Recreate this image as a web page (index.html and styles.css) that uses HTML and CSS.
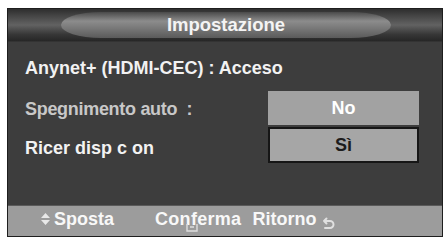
FILE: index.html
```html
<!DOCTYPE html>
<html>
<head>
<meta charset="utf-8">
<link rel="stylesheet" href="styles.css">
</head>
<body>
<div class="frame">
  <div class="header">
    <div class="pill">Impostazione</div>
  </div>
  <div class="content">
    <div class="row first">Anynet+ (HDMI-CEC) : Acceso</div>
    <div class="split">
      <div class="labels">
        <div class="row dim">Spegnimento auto&nbsp; :</div>
        <div class="row">Ricer disp c on</div>
      </div>
      <div class="options">
        <div class="opt no">No</div>
        <div class="opt si">Sì</div>
      </div>
    </div>
  </div>
  <div class="footer">
    <span class="item"><svg class="ud" width="9" height="12" viewBox="0 0 9 12"><path d="M4.5 0 L9 5 L0 5 Z M4.5 12 L9 7 L0 7 Z" fill="#e8e8e8"/></svg>Sposta</span>
    <span class="item conf">Conferma<svg class="enter" width="12" height="10" viewBox="0 0 12 10"><path d="M1 2 V9 H11 V2 M4 5 H8" stroke="#ddd" stroke-width="1.4" fill="none"/></svg></span>
    <span class="item">Ritorno<svg class="ret" width="13" height="13" viewBox="0 0 13 13"><path d="M2 4 H8 A3.5 3.5 0 0 1 8 11 H3 M2 4 L4.5 1.5 M2 4 L4.5 6.5" stroke="#e0e0e0" stroke-width="2" fill="none" stroke-linecap="round"/></svg></span>
  </div>
</div>
</body>
</html>
```

FILE: styles.css
```css
html, body {
  margin: 0;
  padding: 0;
  background: #ffffff;
}
body {
  width: 448px;
  height: 240px;
  overflow: hidden;
  font-family: "Liberation Sans", Arial, sans-serif;
  font-weight: bold;
}
.frame {
  margin: 8px 0 0 7px;
  width: 436px;
  height: 229px;
  border: 1px solid #1e1e1e;
  background: #3d3d3d;
  display: flex;
  flex-direction: column;
  box-sizing: border-box;
}
.header {
  height: 32px;
  background: linear-gradient(#2e2e2e 0%, #4e4e4e 30%, #626262 50%, #363636 80%, #262626 100%);
  display: flex;
  align-items: center;
  justify-content: center;
  border-bottom: 1px solid #333;
}
.pill {
  width: 330px;
  height: 26px;
  border-radius: 40px / 13px;
  background: linear-gradient(#4a4a4a 0%, #8c8c8c 35%, #7a7a7a 60%, #5a5a5a 100%);
  color: #f4f4f4;
  font-size: 18.5px;
  display: flex;
  align-items: center;
  justify-content: center;
  margin-left: 2px;
}
.content {
  flex: 1;
  padding: 0 0 0 17px;
  color: #f2f2f2;
  font-size: 18px;
}
.row {
  height: 20px;
  line-height: 20px;
  white-space: nowrap;
}
.first {
  margin-top: 16px;
}
.split {
  display: flex;
  justify-content: space-between;
  margin-top: 13px;
}
.labels {
  display: flex;
  flex-direction: column;
  gap: 19px;
  padding-top: 8px;
}
.dim {
  color: #c8c8c8;
  letter-spacing: -0.3px;
}
.options {
  display: flex;
  flex-direction: column;
  gap: 2px;
  margin-right: 23px;
}
.opt {
  width: 151px;
  height: 34px;
  background: #a2a2a2;
  display: flex;
  align-items: center;
  justify-content: center;
  box-sizing: border-box;
  font-size: 18px;
}
.no {
  color: #ffffff;
}
.si {
  border: 2px solid #161616;
  color: #1c1c1c;
  height: 36px;
  background: #a6a6a6;
}
.footer {
  height: 31px;
  background: #9c9c9c;
  border-top: 1px solid #5a5a5a;
  display: flex;
  align-items: center;
  padding: 0 0 4px 33px;
  box-sizing: border-box;
  color: #f8f8f8;
  font-size: 18px;
}
.item {
  display: flex;
  align-items: center;
  position: relative;
}
.ud {
  margin-right: 4px;
}
.conf {
  margin-left: 41px;
  letter-spacing: 0.3px;
}
.conf + .item {
  margin-left: 11px;
}
.enter {
  position: absolute;
  left: 31px;
  top: 13px;
}
.ret {
  margin-left: 6px;
  margin-top: 8px;
}
```
